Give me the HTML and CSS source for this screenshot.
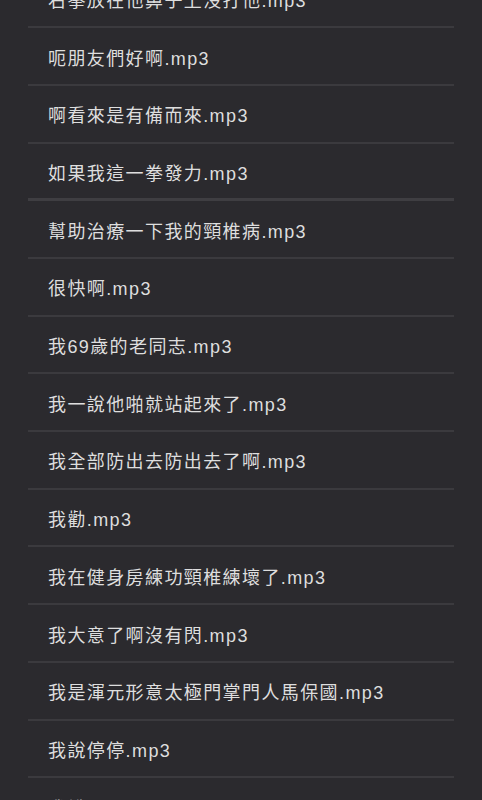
FILE: index.html
```html
<!DOCTYPE html>
<html lang="zh-Hant">
<head>
<meta charset="utf-8">
<title>音效列表</title>
<link rel="stylesheet" href="styles.css">
</head>
<body>
<ul class="list">
  <li class="row">右拳放在他鼻子上沒打他.mp3</li>
  <li class="row">呃朋友們好啊.mp3</li>
  <li class="row">啊看來是有備而來.mp3</li>
  <li class="row row-thick">如果我這一拳發力.mp3</li>
  <li class="row">幫助治療一下我的頸椎病.mp3</li>
  <li class="row">很快啊.mp3</li>
  <li class="row">我69歲的老同志.mp3</li>
  <li class="row">我一說他啪就站起來了.mp3</li>
  <li class="row">我全部防出去防出去了啊.mp3</li>
  <li class="row">我勸.mp3</li>
  <li class="row">我在健身房練功頸椎練壞了.mp3</li>
  <li class="row">我大意了啊沒有閃.mp3</li>
  <li class="row">我是渾元形意太極門掌門人馬保國.mp3</li>
  <li class="row">我說停停.mp3</li>
  <li class="row">我說可以.mp3</li>
</ul>
</body>
</html>
```

FILE: styles.css
```css
html, body {
  margin: 0;
  padding: 0;
  background: #2b2a2e;
  height: 100%;
  overflow: hidden;
}

.list {
  list-style: none;
  margin: -29.4px 28px 0 28px;
  padding: 0;
}

.row {
  box-sizing: border-box;
  height: 57.7px;
  display: flex;
  align-items: center;
  padding-left: 20px;
  padding-top: 1px;
  border-bottom: 2px solid #3b3a3e;
  font-family: "Liberation Sans", "Noto Sans CJK TC", sans-serif;
  font-size: 18px;
  letter-spacing: 1.4px;
  color: #dedede;
  white-space: nowrap;
}

.row-thick {
  border-bottom: 3px solid #3f3e42;
}
```
